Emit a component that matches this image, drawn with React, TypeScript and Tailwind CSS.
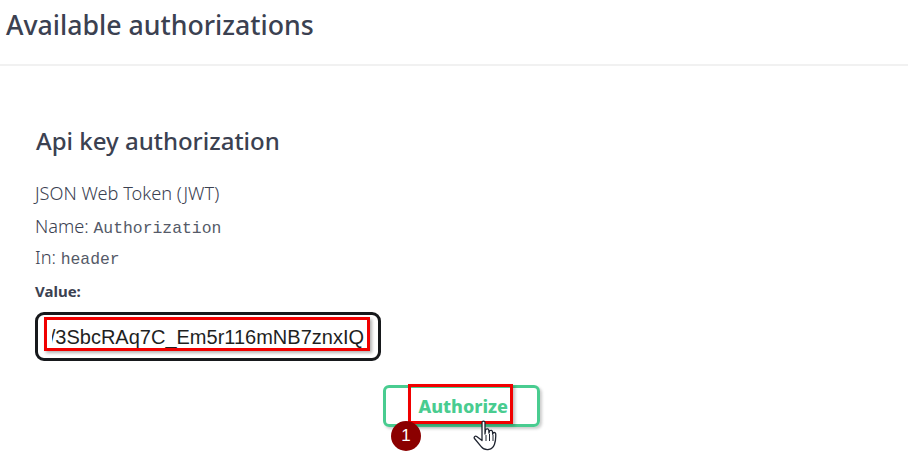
import React from 'react';

const sans = "font-['Noto_Sans','Lato',sans-serif]";
const mono = "font-['Liberation_Mono',monospace] text-[16.4px] font-normal text-[#555a68]";

// cursor drawn by hand, lucide's pointer does not have the same fingers
const HandCursor = () => (
  <svg width="26" height="34" viewBox="0 0 26 34" className="absolute left-[87px] top-[31px]">
    <path
      d="M9 3.5c0-1.8 3-1.8 3 0V15l.6-4.6c1.6-1 3-.6 3.2.8l.2 3 .5-2.400c1.400-.8 2.800-.4 3 .9l.2 2.600.5-1.500c1.200-.6 2.400-.2 2.500 1.100.2 3.400-.2 7.600-1.300 10.600-.9 2.400-2.700 4.400-5.400 4.900-3.500.6-6-.5-7.800-2.800L1.500 19.500c-1-1.300.6-3 2.200-2L9 21.500z"
      fill="#fff"
      stroke="#1f2430"
      strokeWidth="1.300"
      strokeLinejoin="round"
    />
    <path d="M13 16v6M16.500 15v7M20 16v6" stroke="#1f2430" strokeWidth="1" fill="none" />
  </svg>
);

export default function App() {
  return (
    <div className={`w-[908px] h-[474px] bg-white text-[#3b4151] overflow-hidden ${sans}`}>
      <div className="h-[66px] border-b-2 border-[#f1f1f1] pl-[6px] pt-[7px]">
        <h3 className="text-[26.700px] leading-[36px] font-medium">Available authorizations</h3>
      </div>

      <div className="pl-[35px] pt-[59px]">
        <h4 className="pl-[1px] text-[24px] leading-[32px] font-medium">Api key authorization</h4>
        <div className="mt-[22px] text-[18.200px] font-light">
          <p className="h-[32px] leading-[29px]">JSON Web Token (JWT)</p>
          <p className="h-[32px] leading-[30px]">
            Name: <code className={mono}>Authorization</code>
          </p>
          <p className="h-[30px] leading-[29px]">
            In: <code className={mono}>header</code>
          </p>
        </div>
        <label className="block mt-[8px] text-[15px] leading-[20px] font-bold">Value:</label>

        <div className="relative mt-[11px] w-[346px] h-[49px] border-[3px] border-[#17191c] rounded-[9px] bg-white">
          <div className="absolute left-[6px] top-[2px] w-[326px] h-[34px] border-[3px] border-[#f00000] shadow-[2px_2px_3px_rgba(0,0,0,0.3)]" />
          <div className="h-full ml-[14px] mr-[14px] flex items-center justify-end overflow-hidden font-['Liberation_Sans',sans-serif] text-[20px] text-[#1f1f1f] whitespace-nowrap">
            /3SbcRAq7C_Em5r116mNB7znxIQ
          </div>
        </div>

        <div className="relative mt-[24px] ml-[348px] w-[157px] h-[42px] border-[3px] border-[#49cc90] rounded-[6px] shadow-[2px_2px_3px_rgba(0,0,0,0.2)] flex items-center justify-end pr-[29px] text-[18px] font-extrabold text-[#49cc90]">
          Authorize
          <div className="absolute left-[22px] top-[-4px] w-[105px] h-[40px] border-[3px] border-[#f00000] shadow-[2px_2px_3px_rgba(0,0,0,0.25)]" />
          <div className="absolute left-[5px] top-[33px] w-[30px] h-[30px] rounded-full bg-[#8b0000] text-white text-[17px] font-normal font-['Liberation_Sans',sans-serif] flex items-center justify-center">
            1
          </div>
          <HandCursor />
        </div>
      </div>
    </div>
  );
}
